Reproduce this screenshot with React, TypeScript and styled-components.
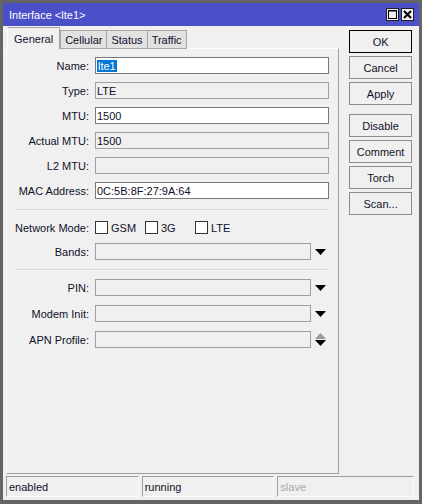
import styled, { createGlobalStyle } from 'styled-components'

const GlobalStyle = createGlobalStyle`
  html, body {
    margin: 0;
    padding: 0;
    background: #f0f0f0;
  }
  * {
    box-sizing: border-box;
  }
`

const Window = styled.div`
  width: 422px;
  height: 504px;
  border: 3px solid #656565;
  border-bottom-width: 4px;
  background: #f0f0f0;
  display: flex;
  flex-direction: column;
  font-family: "Liberation Sans", Arial, sans-serif;
  font-size: 11px;
  color: #10102a;
`

const TitleBar = styled.div`
  height: 23px;
  background: #4b4fc8;
  display: flex;
  align-items: center;
  padding: 0 5px 0 6px;
  color: #fff;
  font-size: 11px;
`

const TitleText = styled.div`
  flex: 1;
`

const TitleButton = styled.div`
  width: 13px;
  height: 13px;
  margin-left: 2px;
  border: 1px solid #202020;
  background: #f0f0f0;
  display: flex;
  align-items: center;
  justify-content: center;
`

const Body = styled.div`
  flex: 1;
  display: flex;
  padding: 1px 7px 0 3px;
  gap: 10px;
`

const LeftColumn = styled.div`
  width: 334px;
  display: flex;
  flex-direction: column;
`

const Tabs = styled.div`
  display: flex;
  align-items: flex-end;
  height: 22px;
  padding-left: 1px;
`

const Tab = styled.div<{ active?: boolean }>`
  height: ${p => (p.active ? '22px' : '19px')};
  padding: 0 ${p => (p.active ? '6px' : '4px')};
  display: flex;
  align-items: center;
  background: ${p => (p.active ? '#f0f0f0' : '#e2e2e2')};
  border: 1px solid #a6a6a6;
  border-bottom: ${p => (p.active ? 'none' : '1px solid #a6a6a6')};
  border-left-color: ${p => (p.active ? '#ffffff' : '#a6a6a6')};
  margin-right: ${p => (p.active ? '0' : '-1px')};
  position: relative;
  z-index: ${p => (p.active ? 1 : 0)};
`

const Panel = styled.div`
  flex: 1;
  margin-top: -1px;
  border: 1px solid #a0a0a0;
  border-left-color: #ffffff;
  border-top-color: #ffffff;
  padding: 8px 9px 0 0;
  display: flex;
  flex-direction: column;
`

const Row = styled.div<{ gap?: number }>`
  display: grid;
  grid-template-columns: 88px 1fr 18px;
  align-items: center;
  height: 17px;
  margin-bottom: ${p => p.gap ?? 8}px;
`

const Label = styled.div`
  text-align: right;
  white-space: nowrap;
  padding-right: 6px;
`

const Field = styled.div<{ editable?: boolean; span?: boolean }>`
  height: 17px;
  border: 1px solid ${p => (p.editable ? '#7a7a7a' : '#a0a0a0')};
  background: ${p => (p.editable ? '#ffffff' : '#f0f0f0')};
  display: flex;
  align-items: center;
  padding-left: 1px;
  grid-column: ${p => (p.span ? '2 / 4' : 'auto')};
`

const Selected = styled.span`
  background: #0078d7;
  color: #fff;
  padding: 0 1px;
`

const Separator = styled.div`
  height: 2px;
  border-top: 1px solid #d5d5d5;
  border-bottom: 1px solid #fafafa;
  margin: 0 0 0 8px;
`

const CheckGroup = styled.div`
  display: flex;
  align-items: center;
  grid-column: 2 / 4;
`

const CheckItem = styled.label`
  display: flex;
  align-items: center;
  width: 50px;
`

const CheckBox = styled.span`
  width: 13px;
  height: 13px;
  border: 1px solid #333;
  background: #fff;
  margin-right: 3px;
`

const ArrowCell = styled.div`
  display: flex;
  flex-direction: column;
  align-items: center;
  justify-content: center;
  gap: 1px;
`

const RightColumn = styled.div`
  width: 63px;
  display: flex;
  flex-direction: column;
  padding-top: 3px;
`

const Button = styled.div<{ primary?: boolean; gap?: number }>`
  height: 23px;
  border: 1px solid ${p => (p.primary ? '#000000' : '#8c8c8c')};
  background: #f0f0f0;
  display: flex;
  align-items: center;
  justify-content: center;
  margin-bottom: ${p => p.gap ?? 3}px;
`

const StatusBar = styled.div`
  height: 26px;
  display: flex;
  gap: 3px;
  padding: 2px 5px 3px 3px;
`

const StatusCell = styled.div<{ w: number; dim?: boolean }>`
  width: ${p => p.w}px;
  border: 1px solid #a0a0a0;
  border-right-color: #fafafa;
  border-bottom-color: #fafafa;
  display: flex;
  align-items: center;
  padding-left: 2px;
  color: ${p => (p.dim ? '#a9a9a9' : '#10102a')};
`

function DownArrow({ color = '#000' }: { color?: string }) {
  return (
    <svg width="11" height="6" viewBox="0 0 11 6">
      <polygon points="0,0 11,0 5.5,6" fill={color} />
    </svg>
  )
}

function UpArrow({ color = '#999' }: { color?: string }) {
  return (
    <svg width="11" height="6" viewBox="0 0 11 6">
      <polygon points="5.5,0 11,6 0,6" fill={color} />
    </svg>
  )
}

export default function App() {
  return (
    <>
      <GlobalStyle />
      <Window>
        <TitleBar>
          <TitleText>Interface &lt;lte1&gt;</TitleText>
          <TitleButton>
            <svg width="9" height="9" viewBox="0 0 9 9">
              <rect x="0.5" y="0.5" width="8" height="8" fill="none" stroke="#000" />
              <rect x="0" y="0" width="9" height="1.5" fill="#000" />
            </svg>
          </TitleButton>
          <TitleButton>
            <svg width="9" height="9" viewBox="0 0 9 9">
              <path d="M1 1 L8 8 M8 1 L1 8" stroke="#000" strokeWidth="2" />
            </svg>
          </TitleButton>
        </TitleBar>
        <Body>
          <LeftColumn>
            <Tabs>
              <Tab active>General</Tab>
              <Tab>Cellular</Tab>
              <Tab>Status</Tab>
              <Tab>Traffic</Tab>
            </Tabs>
            <Panel>
              <Row>
                <Label>Name:</Label>
                <Field editable span><Selected>lte1</Selected></Field>
              </Row>
              <Row>
                <Label>Type:</Label>
                <Field span>LTE</Field>
              </Row>
              <Row>
                <Label>MTU:</Label>
                <Field editable span>1500</Field>
              </Row>
              <Row>
                <Label>Actual MTU:</Label>
                <Field span>1500</Field>
              </Row>
              <Row>
                <Label>L2 MTU:</Label>
                <Field span />
              </Row>
              <Row gap={10}>
                <Label>MAC Address:</Label>
                <Field editable span>0C:5B:8F:27:9A:64</Field>
              </Row>
              <Separator />
              <Row gap={7} style={{ marginTop: 8 }}>
                <Label>Network Mode:</Label>
                <CheckGroup>
                  <CheckItem><CheckBox />GSM</CheckItem>
                  <CheckItem><CheckBox />3G</CheckItem>
                  <CheckItem><CheckBox />LTE</CheckItem>
                </CheckGroup>
              </Row>
              <Row gap={9}>
                <Label>Bands:</Label>
                <Field />
                <ArrowCell><DownArrow /></ArrowCell>
              </Row>
              <Separator />
              <Row style={{ marginTop: 8 }} gap={9}>
                <Label>PIN:</Label>
                <Field />
                <ArrowCell><DownArrow /></ArrowCell>
              </Row>
              <Row gap={9}>
                <Label>Modem Init:</Label>
                <Field />
                <ArrowCell><DownArrow /></ArrowCell>
              </Row>
              <Row>
                <Label>APN Profile:</Label>
                <Field />
                <ArrowCell>
                  <UpArrow />
                  <DownArrow />
                </ArrowCell>
              </Row>
            </Panel>
          </LeftColumn>
          <RightColumn>
            <Button primary>OK</Button>
            <Button>Cancel</Button>
            <Button gap={9}>Apply</Button>
            <Button>Disable</Button>
            <Button>Comment</Button>
            <Button>Torch</Button>
            <Button>Scan...</Button>
          </RightColumn>
        </Body>
        <StatusBar>
          <StatusCell w={133}>enabled</StatusCell>
          <StatusCell w={133}>running</StatusCell>
          <StatusCell w={137} dim>slave</StatusCell>
        </StatusBar>
      </Window>
    </>
  )
}
